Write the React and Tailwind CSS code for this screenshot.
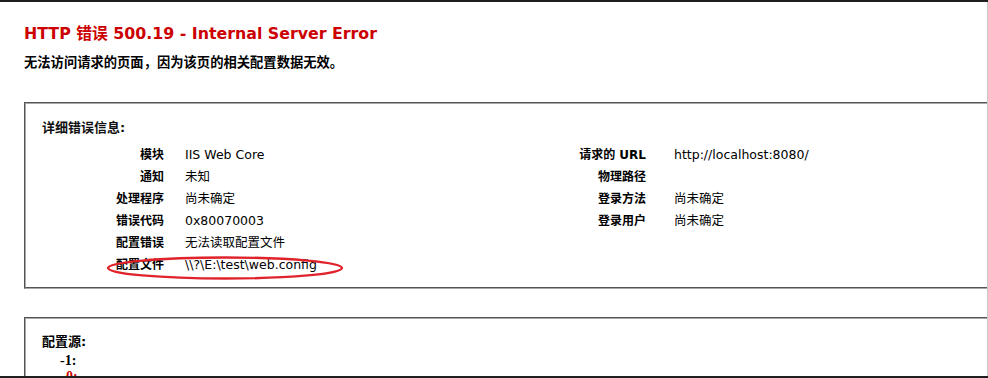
import React from 'react';

// IIS detailed error page (500.19)
const LEFT_ROWS = [
  ['模块', 'IIS Web Core'],
  ['通知', '未知'],
  ['处理程序', '尚未确定'],
  ['错误代码', '0x80070003'],
  ['配置错误', '无法读取配置文件'],
  ['配置文件', '\\\\?\\E:\\test\\web.config'],
];

const RIGHT_ROWS = [
  ['请求的 URL', 'http://localhost:8080/'],
  ['物理路径', ''],
  ['登录方法', '尚未确定'],
  ['登录用户', '尚未确定'],
];

const FONT = "font-['DejaVu_Sans','Noto_Sans_CJK_SC',sans-serif]";

function Row({ label, value, labelWidth, gap }) {
  return (
    <div className="flex h-[22px] items-center text-black">
      <div className={`${labelWidth} shrink-0 text-right text-[12px] font-bold`}>{label}</div>
      <div className={`${gap} whitespace-nowrap text-[12.5px]`}>{value}</div>
    </div>
  );
}

function Panel({ children, className = '' }) {
  return (
    <div
      className={`ml-[24px] w-[980px] border-2 border-[#a8a8a8] [border-style:groove] bg-white ${className}`}
    >
      {children}
    </div>
  );
}

export default function App() {
  return (
    <div className={`relative h-[378px] w-[988px] overflow-hidden bg-white ${FONT}`}>
      {/* top strip */}
      <div className="h-[2px] w-full bg-[#1f1f1f]" />

      <div className="flex h-[376px]">
        <div className="w-[987px] shrink-0 overflow-hidden">
          {/* Header */}
          <h2 className="mt-[21px] ml-[24px] h-[22px] text-[15.8px] leading-[22px] font-bold text-[#cc0000]">
            HTTP 错误 500.19 - Internal Server Error
          </h2>
          <p className="mt-[8px] ml-[24px] text-[13.3px] leading-[20px] font-bold text-black">
            无法访问请求的页面，因为该页的相关配置数据无效。
          </p>

          {/* Details */}
          <Panel className="relative mt-[29px] h-[187px]">
            <div className="pt-[14px] pl-[16px] text-[13px] leading-[20px] font-bold text-[#111]">
              详细错误信息:
            </div>
            <div className="mt-[6px] flex">
              <div className="w-[460px] pl-[16px]">
                {LEFT_ROWS.map(([l, v]) => (
                  <Row key={l} label={l} value={v} labelWidth="w-[122px]" gap="ml-[21px]" />
                ))}
              </div>
              <div className="pl-[17px]">
                {RIGHT_ROWS.map(([l, v]) => (
                  <Row key={l} label={l} value={v} labelWidth="w-[143px]" gap="ml-[28px]" />
                ))}
              </div>
            </div>

            {/* red annotation */}
            <svg
              className="pointer-events-none absolute left-[77px] top-[149px]"
              width="244"
              height="30"
              viewBox="0 0 244 30"
            >
              <ellipse
                cx="122"
                cy="15"
                rx="117"
                ry="10.5"
                fill="none"
                stroke="#e0232b"
                strokeWidth="2.4"
              />
            </svg>
          </Panel>

          {/* Config source */}
          <Panel className="mt-[28px] h-[80px]">
            <div className="pt-[13px] pl-[16px] text-[13px] leading-[20px] font-bold text-black">
              配置源:
            </div>
            <pre className="pl-[34px] font-['Liberation_Serif',serif] text-[14px] leading-[17px] font-bold text-black">
              -1:
            </pre>
            <pre className="pl-[40px] font-['Liberation_Serif',serif] text-[14px] leading-[15px] font-bold text-[#cc0000]">
              0:
            </pre>
          </Panel>
        </div>
        <div className="w-[1px] bg-[#c8c8c8]" />
      </div>

      {/* bottom strip */}
      <div className="absolute bottom-0 left-0 h-[2px] w-full bg-[#1f1f1f]" />
    </div>
  );
}
